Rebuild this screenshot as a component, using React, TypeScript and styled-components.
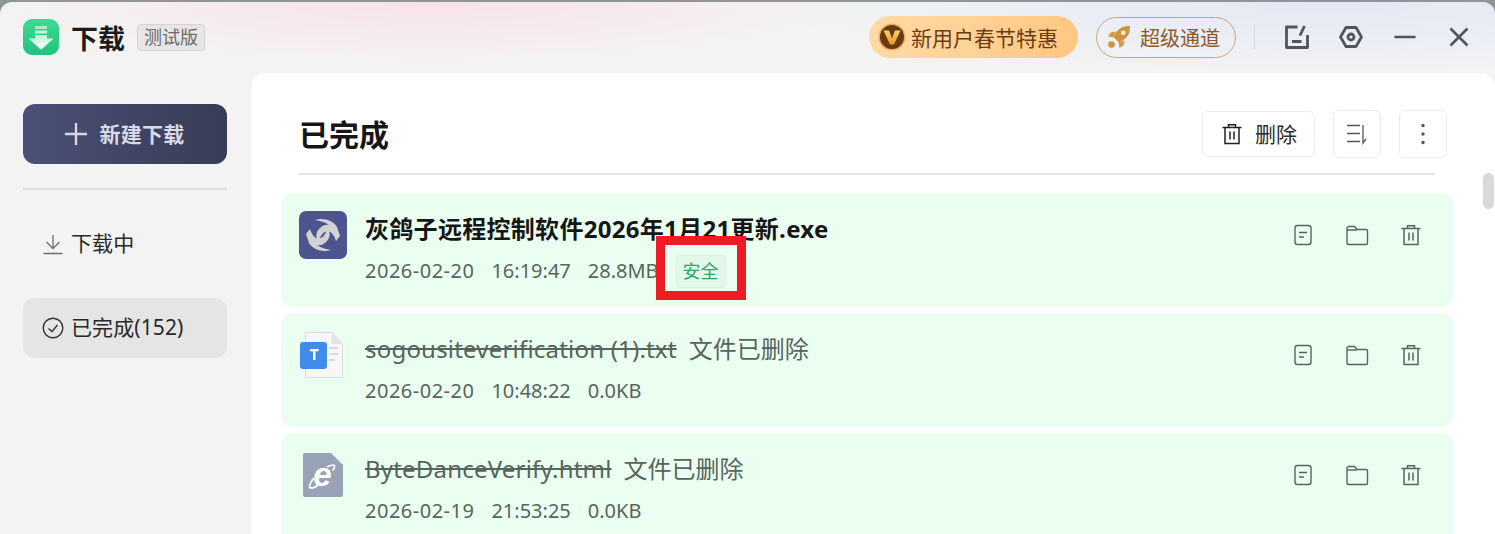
import React from 'react';
import styled, { createGlobalStyle } from 'styled-components';

const GlobalStyle = createGlobalStyle`
  html, body {
    margin: 0;
    padding: 0;
    height: 100%;
    overflow: hidden;
    background: #8f9494;
  }
  #root {
    height: 100%;
  }
  * {
    box-sizing: border-box;
  }
`;

interface FileItem {
  name: string;
  date: string;
  time: string;
  size: string;
  deleted?: boolean;
  safe?: boolean;
  icon: React.ReactNode;
}

const LogoIcon = () => (
  <svg width="36" height="36" viewBox="0 0 36 36">
    <defs>
      <linearGradient id="logoBg" x1="0" y1="0" x2="0" y2="1">
        <stop offset="0" stopColor="#3fd890" />
        <stop offset="1" stopColor="#1fc47f" />
      </linearGradient>
      <linearGradient id="logoArrow" x1="0" y1="0" x2="0" y2="1">
        <stop offset="0" stopColor="#bdf0d6" />
        <stop offset="1" stopColor="#ffffff" />
      </linearGradient>
    </defs>
    <rect width="36" height="36" rx="9" fill="url(#logoBg)" />
    <rect x="12" y="7" width="12" height="3" fill="#a9ebc9" />
    <rect x="12" y="11.500" width="12" height="3" fill="#c8f3dc" />
    <path d="M12 16h12v3.600h6.500L18.800 30a1.200 1.200 0 0 1-1.600 0L5.500 19.600H12z" fill="url(#logoArrow)" />
  </svg>
);

const VipIcon = () => (
  <svg width="28" height="28" viewBox="0 0 28 28">
    <defs>
      <linearGradient id="vipV" x1="0" y1="0" x2="0" y2="1">
        <stop offset="0" stopColor="#f8d16a" />
        <stop offset="1" stopColor="#e99a20" />
      </linearGradient>
    </defs>
    <circle cx="14" cy="14" r="13.500" fill="#e6ae5c" />
    <circle cx="14" cy="14" r="12" fill="#69390f" />
    <path d="M5.500 7.500h5.500L14 15.500l3-8h5.500L16 21.500h-4z" fill="url(#vipV)" />
  </svg>
);

const RocketIcon = () => (
  <svg width="24" height="24" viewBox="0 0 24 24">
    <path d="M23 1c-6.500-.3-11.500 2.200-15 8l-1.500 3 5.500 5.500 3-1.500c5.800-3.500 8.300-8.500 8-15z" fill="#cf9440" />
    <path d="M8.500 6.500 3.500 7.500 1 11.500l5.500 1zM17.500 15.500l-1 5-4 2.500-1-5.500z" fill="#d59b47" />
    <circle cx="4.500" cy="19.500" r="3.300" fill="#cf9440" />
    <circle cx="16.200" cy="7.800" r="2.300" fill="#fbf1df" />
  </svg>
);

const EditBoxIcon = () => (
  <svg width="26" height="26" viewBox="0 0 26 26" fill="none" stroke="#50575c" strokeWidth="2.800">
    <path d="M13.500 3H2.500v20.500h21V11" strokeLinejoin="round" />
    <path d="M8 17.500h9.500" />
    <path d="M20.500 2 16 11.500" />
  </svg>
);

const HexIcon = () => (
  <svg width="26" height="26" viewBox="0 0 26 26" fill="none" stroke="#50575c" strokeWidth="2.800">
    <path d="M8 3.500h10l5.500 9.500-5.500 9.500H8L2.500 13z" strokeLinejoin="round" />
    <circle cx="13" cy="13" r="3" />
  </svg>
);

const MinimizeIcon = () => (
  <svg width="24" height="24" viewBox="0 0 24 24" fill="none" stroke="#50575c" strokeWidth="2.600">
    <path d="M1.500 12h21" />
  </svg>
);

const CloseIcon = () => (
  <svg width="24" height="24" viewBox="0 0 24 24" fill="none" stroke="#50575c" strokeWidth="2.600">
    <path d="M3.500 3.500l17 17M20.500 3.500l-17 17" />
  </svg>
);

const TrashIcon = ({ color = '#222', size = 24 }: { color?: string; size?: number }) => (
  <svg width={size} height={size} viewBox="0 0 24 24" fill="none" stroke={color} strokeWidth="1.500">
    <path d="M2.500 5.500h19" />
    <path d="M8.500 5.500V2.800h7v2.700" />
    <path d="M5 5.500v16h14v-16" />
    <path d="M10 9.500v8M14 9.500v8" />
  </svg>
);

const SortIcon = () => (
  <svg width="24" height="24" viewBox="0 0 24 24" fill="none" stroke="#555" strokeWidth="1.300">
    <path d="M2 3.500h13M2 11.500h13M2 19.500h13" />
    <path d="M18 3v18l3-4" />
  </svg>
);

const DotsIcon = () => (
  <svg width="24" height="24" viewBox="0 0 24 24" fill="#555">
    <circle cx="12" cy="3.500" r="1.700" />
    <circle cx="12" cy="12" r="1.700" />
    <circle cx="12" cy="20.500" r="1.700" />
  </svg>
);

const PlusIcon = () => (
  <svg width="22" height="22" viewBox="0 0 22 22" fill="none" stroke="#d5d7e2" strokeWidth="2.400">
    <path d="M11 0v22M0 11h22" />
  </svg>
);

const DownloadIcon = () => (
  <svg width="22" height="22" viewBox="0 0 22 22" fill="none" stroke="#6f6f6f" strokeWidth="1.300">
    <path d="M11 2v13M4.500 9 11 15.500 17.500 9" />
    <path d="M1.500 20.500h19" />
  </svg>
);

const CheckCircleIcon = () => (
  <svg width="22" height="22" viewBox="0 0 22 22" fill="none" stroke="#333" strokeWidth="1.400">
    <circle cx="11" cy="11" r="9.800" />
    <path d="M6.500 11.500 10 14.500 15.500 8" />
  </svg>
);

const DocIcon = () => (
  <svg width="24" height="24" viewBox="0 0 24 24" fill="none" stroke="#55655c" strokeWidth="1.400">
    <rect x="4" y="2.500" width="16" height="19" rx="2.500" />
    <path d="M8 9.500h8M8 14h5" />
  </svg>
);

const FolderIcon = () => (
  <svg width="24" height="24" viewBox="0 0 24 24" fill="none" stroke="#55655c" strokeWidth="1.400">
    <path d="M2 5.500a2 2 0 0 1 2-2h5.500l2.500 3h9a1.500 1.500 0 0 1 1.500 1.500v12a1.500 1.500 0 0 1-1.500 1.500H3.500A1.500 1.500 0 0 1 2 20z" strokeLinejoin="round" />
    <path d="M2 7h10" />
  </svg>
);

const swoosh =
  'M16 9C24 6.500 34 9 38 16l3 9-4 5C35 23 30 18 25 21.500 21.500 24.500 20.500 27 21 31 16 28 16.500 22 20 18 23 14.500 27 13 30 14 26 11 21 10 16 9z';

const RemoteIcon = () => (
  <svg width="48" height="48" viewBox="0 0 48 48">
    <rect width="48" height="48" rx="7" fill="#4d5490" />
    <path d={swoosh} fill="#d2d2d4" />
    <path d={swoosh} fill="#d2d2d4" transform="rotate(180 24 24)" />
  </svg>
);

const TextFileIcon = () => (
  <svg width="48" height="48" viewBox="0 0 48 48">
    <path d="M6.500 1.500h26L43.500 13v33.500h-37z" fill="#f7f7f9" stroke="#dcdcdf" />
    <path d="M32.500 1.500V13h11z" fill="#e4e4e8" />
    <path d="M30 17h9M30 23h9M30 29h6" stroke="#cfcfd6" strokeWidth="1.500" />
    <rect x="1" y="11" width="27" height="27" rx="3" fill="#3f8cec" />
    <path d="M11 18h8.500v2.200h-3V29h-2.500v-8.800h-3z" fill="#fff" />
  </svg>
);

const HtmlFileIcon = () => (
  <svg width="48" height="48" viewBox="0 0 48 48">
    <path d="M4 4a2 2 0 0 1 2-2h26l12 12v30a2 2 0 0 1-2 2H6a2 2 0 0 1-2-2z" fill="#98a3b7" />
    <text x="23.500" y="35" textAnchor="middle" fontFamily="'Liberation Sans', sans-serif" fontStyle="italic" fontWeight="700" fontSize="33" fill="#fff">e</text>
    <path d="M15 27c-4 5-5.500 8-4 9.500 1.500 1.300 5-.3 8-2.500" fill="none" stroke="#fff" strokeWidth="2" />
    <path d="M28 16c4-2 7-2.500 7.500-1 .3 1-.5 2.800-2 4.500" fill="none" stroke="#fff" strokeWidth="1.600" />
  </svg>
);

const files: FileItem[] = [
  {
    name: '灰鸽子远程控制软件2026年1月21更新.exe',
    date: '2026-02-20',
    time: '16:19:47',
    size: '28.8MB',
    safe: true,
    icon: <RemoteIcon />,
  },
  {
    name: 'sogousiteverification (1).txt',
    date: '2026-02-20',
    time: '10:48:22',
    size: '0.0KB',
    deleted: true,
    icon: <TextFileIcon />,
  },
  {
    name: 'ByteDanceVerify.html',
    date: '2026-02-19',
    time: '21:53:25',
    size: '0.0KB',
    deleted: true,
    icon: <HtmlFileIcon />,
  },
];

const App = () => {
  return (
    <>
      <GlobalStyle />
      <Window>
        <Header>
          <Brand>
            <LogoIcon />
            <BrandName>下载</BrandName>
            <BetaTag>测试版</BetaTag>
          </Brand>
          <HeaderRight>
            <PromoPill>
              <VipIcon />
              新用户春节特惠
            </PromoPill>
            <ChannelPill>
              <RocketIcon />
              超级通道
            </ChannelPill>
            <HeaderDivider />
            <WindowButtons>
              <EditBoxIcon />
              <HexIcon />
              <MinimizeIcon />
              <CloseIcon />
            </WindowButtons>
          </HeaderRight>
        </Header>
        <Body>
          <Sidebar>
            <NewButton>
              <PlusIcon />
              新建下载
            </NewButton>
            <SideDivider />
            <NavItem>
              <DownloadIcon />
              <NavLabel>下载中</NavLabel>
            </NavItem>
            <NavItem active>
              <CheckCircleIcon />
              <NavLabel>已完成(152)</NavLabel>
            </NavItem>
          </Sidebar>
          <Panel>
            <PanelHead>
              <Title>已完成</Title>
              <Tools>
                <DeleteButton>
                  <TrashIcon />
                  <DeleteLabel>删除</DeleteLabel>
                </DeleteButton>
                <SquareButton>
                  <SortIcon />
                </SquareButton>
                <SquareButton>
                  <DotsIcon />
                </SquareButton>
              </Tools>
            </PanelHead>
            <List>
              {files.map((file) => (
                <Row key={file.date + file.time}>
                  <FileIcon>{file.icon}</FileIcon>
                  <Info>
                    <NameLine>
                      <FileName deleted={file.deleted}>{file.name}</FileName>
                      {file.deleted && <DeletedNote>文件已删除</DeletedNote>}
                    </NameLine>
                    <Meta>
                      <DateText>{file.date}</DateText>
                      <MetaText>{file.time}</MetaText>
                      <MetaText>{file.size}</MetaText>
                      {file.safe && (
                        <SafeBadge>
                          安全
                          <Annotation />
                        </SafeBadge>
                      )}
                    </Meta>
                  </Info>
                  <RowActions>
                    <DocIcon />
                    <FolderIcon />
                    <TrashIcon color="#55655c" />
                  </RowActions>
                </Row>
              ))}
            </List>
            <ScrollThumb />
          </Panel>
        </Body>
      </Window>
    </>
  );
};

export default App;

const Window = styled.div`
  margin-top: 2px;
  height: 532px;
  border-radius: 12px 12px 0 0;
  overflow: hidden;
  display: flex;
  flex-direction: column;
  font-family: 'Noto Sans', 'Noto Sans CJK SC', sans-serif;
  color: #1c1c1c;
  background:
    radial-gradient(ellipse 430px 62px at 430px 0, #f8e1e8 0%, rgba(248, 225, 232, 0) 100%),
    radial-gradient(ellipse 560px 72px at 1330px 0, #e2e8f4 0%, rgba(226, 232, 244, 0) 100%),
    #f3f3f3;
`;

const Header = styled.header`
  height: 71px;
  flex-shrink: 0;
  display: flex;
  align-items: center;
  justify-content: space-between;
  padding: 0 23px 1px 23px;
`;

const Brand = styled.div`
  display: flex;
  align-items: center;
`;

const BrandName = styled.div`
  margin: 3px 0 0 12px;
  font-size: 27px;
  font-weight: 700;
  line-height: 36px;
`;

const BetaTag = styled.div`
  margin: 1px 0 0 12px;
  height: 27px;
  padding: 0 6px;
  border: 1px solid #d6d2d2;
  border-radius: 4px;
  background: #e9e4e5;
  color: #6b6b6b;
  font-size: 18px;
  line-height: 24px;
`;

const HeaderRight = styled.div`
  display: flex;
  align-items: center;
`;

const PromoPill = styled.div`
  width: 209px;
  height: 42px;
  padding-left: 9px;
  display: flex;
  align-items: center;
  gap: 5px;
  border-radius: 21px;
  background: linear-gradient(90deg, #ffdba6, #ffc782);
  color: #6b3d12;
  font-size: 21px;
  white-space: nowrap;
`;

const ChannelPill = styled.div`
  margin-left: 18px;
  width: 140px;
  height: 41px;
  padding-left: 10px;
  display: flex;
  align-items: center;
  gap: 9px;
  border: 1px solid #c8a681;
  border-radius: 21px;
  color: #8a5a2b;
  font-size: 20px;
  white-space: nowrap;
`;

const HeaderDivider = styled.div`
  margin-left: 18px;
  width: 1px;
  height: 24px;
  background: #d5d8dc;
`;

const WindowButtons = styled.div`
  margin-left: 29px;
  display: grid;
  grid-template-columns: repeat(4, 26px);
  gap: 28px;
  align-items: center;
  justify-items: center;
`;

const Body = styled.div`
  flex: 1;
  min-height: 0;
  display: flex;
`;

const Sidebar = styled.aside`
  width: 251px;
  flex-shrink: 0;
  padding: 31px 24px 0 23px;
`;

const NewButton = styled.div`
  height: 60px;
  display: flex;
  align-items: center;
  justify-content: center;
  gap: 12px;
  border-radius: 12px;
  background: linear-gradient(90deg, #4b5078, #383c55);
  color: #d9dbe4;
  font-size: 21px;
  font-weight: 700;
  letter-spacing: 0.3px;
  line-height: 56px;
`;

const SideDivider = styled.div`
  margin: 24px 0 24px;
  height: 2px;
  background: #dcdcdc;
`;

const NavItem = styled.div<{ active?: boolean }>`
  height: 60px;
  margin-bottom: 24px;
  padding-left: 19px;
  display: flex;
  align-items: center;
  gap: 7px;
  border-radius: 12px;
  background: ${({ active }) => (active ? '#e5e5e5' : 'transparent')};
  color: #2a2a2a;
  font-size: 21px;
`;

const NavLabel = styled.span`
  margin-top: -4px;
  letter-spacing: 0.1px;
`;

const Panel = styled.main`
  position: relative;
  flex: 1;
  min-width: 0;
  padding: 0 42px 0 30px;
  border-radius: 14px 14px 0 0;
  background: #fff;
`;

const PanelHead = styled.div`
  height: 102px;
  margin: 0 18px 18px 18px;
  padding-top: 24px;
  display: flex;
  align-items: center;
  justify-content: space-between;
  border-bottom: 2px solid #e4e4e4;
`;

const Title = styled.h1`
  margin: 0;
  font-size: 30px;
  font-weight: 700;
  line-height: 40px;
  color: #161616;
`;

const Tools = styled.div`
  display: flex;
  align-items: center;
  gap: 18px;
  margin: 0 -12px 2px 0;
`;

const DeleteButton = styled.div`
  width: 113px;
  height: 46px;
  display: flex;
  align-items: center;
  justify-content: center;
  gap: 11px;
  border: 1px solid #ececec;
  border-radius: 6px;
  color: #2b2b2b;
  font-size: 21px;
`;

const DeleteLabel = styled.span`
  margin-top: -2px;
`;

const SquareButton = styled.div`
  width: 48px;
  height: 48px;
  display: flex;
  align-items: center;
  justify-content: center;
  border: 1px solid #ececec;
  border-radius: 6px;
`;

const List = styled.div`
  display: flex;
  flex-direction: column;
  gap: 6px;
`;

const Row = styled.div`
  height: 114px;
  flex-shrink: 0;
  padding: 18px 30px 0 18px;
  display: flex;
  border-radius: 12px;
  background: #ebfff1;
`;

const FileIcon = styled.div`
  width: 48px;
  height: 48px;
  flex-shrink: 0;
`;

const Info = styled.div`
  flex: 1;
  min-width: 0;
  margin-left: 18px;
`;

const NameLine = styled.div`
  height: 36px;
  display: flex;
  align-items: center;
  gap: 12px;
`;

const FileName = styled.div<{ deleted?: boolean }>`
  font-size: 24px;
  line-height: 36px;
  font-weight: ${({ deleted }) => (deleted ? 400 : 700)};
  letter-spacing: ${({ deleted }) => (deleted ? '0.2px' : '0.3px')};
  color: ${({ deleted }) => (deleted ? '#56655c' : '#161616')};
  text-decoration: ${({ deleted }) => (deleted ? 'line-through' : 'none')};
`;

const DeletedNote = styled.div`
  font-size: 24px;
  line-height: 36px;
  color: #56655c;
`;

const Meta = styled.div`
  margin-top: 8px;
  height: 33px;
  display: flex;
  align-items: center;
  gap: 17px;
  color: #56655c;
  font-size: 20px;
`;

const MetaText = styled.span`
  margin-top: -3px;
`;

const DateText = styled(MetaText)`
  letter-spacing: 0.5px;
`;

const SafeBadge = styled.div`
  position: relative;
  width: 50px;
  height: 33px;
  padding-bottom: 4px;
  display: flex;
  align-items: center;
  justify-content: center;
  border: 1px solid #d9f2e1;
  border-radius: 4px;
  background: #e3f8ea;
  color: #2fa56a;
  font-size: 18px;
`;

const Annotation = styled.div`
  position: absolute;
  left: -21px;
  top: -20px;
  width: 90px;
  height: 64px;
  border: 9px solid #ee1c25;
`;

const RowActions = styled.div`
  display: flex;
  align-items: flex-start;
  gap: 30px;
  padding-top: 6px;
  margin-top: 6px;
`;

const ScrollThumb = styled.div`
  position: absolute;
  top: 100px;
  right: 1px;
  width: 11px;
  height: 36px;
  border-radius: 6px;
  background: #d9d9d9;
`;
